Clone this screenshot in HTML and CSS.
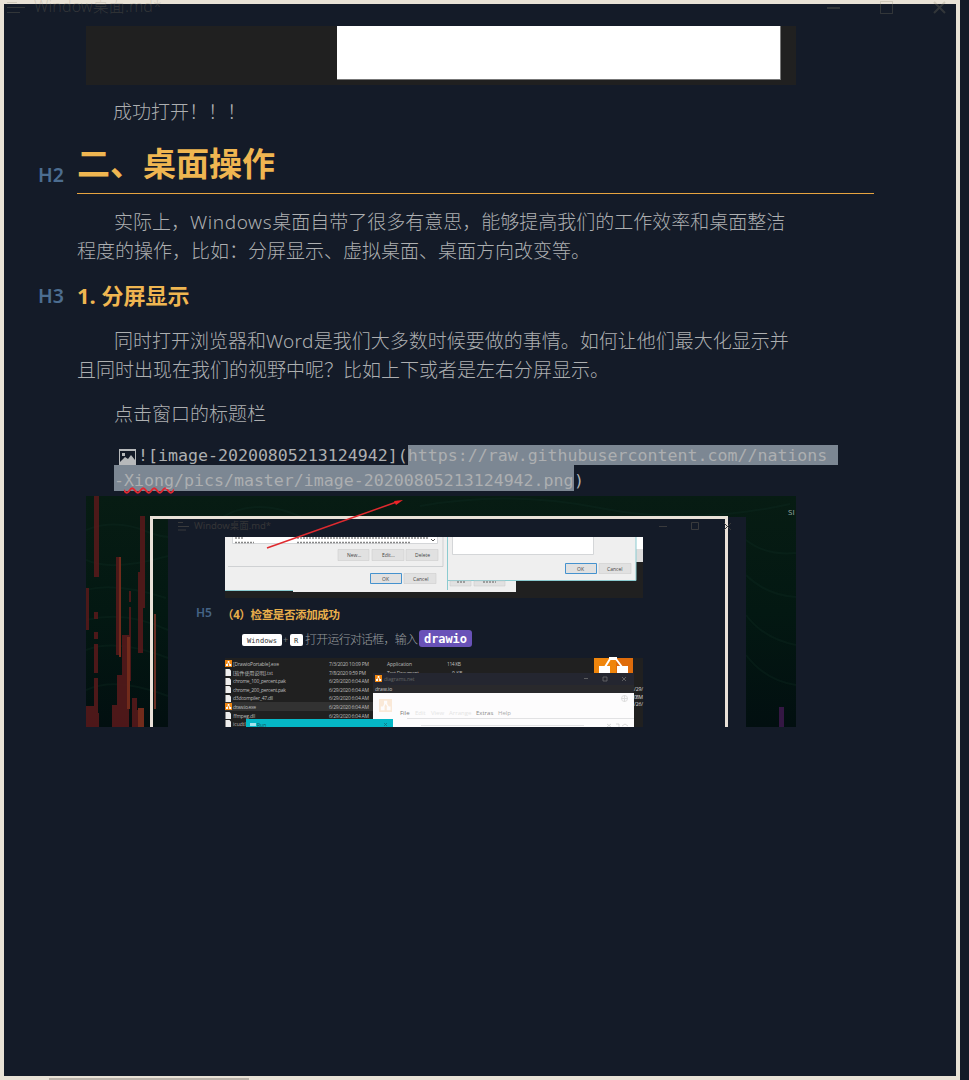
FILE: index.html
```html
<!DOCTYPE html>
<html lang="zh-CN">
<head>
<meta charset="utf-8">
<title>Window桌面.md</title>
<link rel="stylesheet" href="styles.css">
</head>
<body>
<div class="window">
  <header class="titlebar">
    <svg class="menu" width="20" height="15" viewBox="0 0 20 15"><path d="M1 2.500h10M1 7.500h18M1 12.500h13"/></svg>
    <span class="filename">Window桌面.md*</span>
    <svg class="controls" width="122" height="16" viewBox="0 0 122 16"><path stroke-width="2" d="M1 8h13M108 2l11 11M119 2L108 13"/><path d="M54.500 1.500h12v12h-12z"/></svg>
  </header>
  <main class="document">
    <div class="banner"><div class="banner-page"></div></div>
    <p class="opened">成功打开！！！</p>
    <div class="heading h2"><span class="level">H2</span><h2>二、桌面操作</h2></div>
    <p class="intro"><span class="line first">实际上，<span class="latin">Windows</span>桌面自带了很多有意思，能够提高我们的工作效率和桌面整洁</span><span class="line">程度的操作，比如：分屏显示、虚拟桌面、桌面方向改变等。</span></p>
    <div class="heading h3"><span class="level">H3</span><h3>1. 分屏显示</h3></div>
    <p class="split"><span class="line first">同时打开浏览器和<span class="latin word">Word</span>是我们大多数时候要做的事情。如何让他们最大化显示并</span><span class="line">且同时出现在我们的视野中呢？比如上下或者是左右分屏显示。</span></p>
    <p class="click"><span class="line first">点击窗口的标题栏</span></p>
    <div class="source">
      <div class="source-row"><svg class="picture-icon" width="17" height="16" viewBox="0 0 17 16"><path fill="#b7b9bb" d="M0 0h17v16H0z"/><path fill="#141b28" d="M1 2h15v9l-4-5-3 4-3-2-3 3-2 2z"/><path fill="#b7b9bb" d="M3 4h3v3H3z"/></svg><span>![image-20200805213124942](</span><span class="selected top">https://raw.githubusercontent.com//nations</span></div>
      <div class="source-row second"><span class="selected bottom">-<span class="typo">Xiong</span>/pics/master/image-20200805213124942.png</span><span>)</span></div>
    </div>
    <svg class="preview" width="710" height="231" viewBox="86 496 710 231">
      <defs>
        <linearGradient id="sea" x2="0" y2="1"><stop offset="0" stop-color="#071c13"/><stop offset=".5" stop-color="#031812"/><stop offset="1" stop-color="#020f10"/></linearGradient>
        <g id="tree"><path fill="#ee8510" d="M0 0h7v7H0z"/><path d="M3.500 2L2 5M3.500 2l2 3" stroke="#fff" stroke-width=".7"/><path fill="#fff" d="M2.700 1h1.700v1.600H2.700zM1 4h2v2H1zM4.200 4h2v2h-2z"/></g>
        <g id="file"><path fill="#eee" d="M0 0h4l1.500 1.500V7H0z"/></g>
      </defs>
      <path fill="url(#sea)" d="M86 496h710v231H86z"/>
      <g class="waves"><path d="M86 530q30-12 62 2t70-12 90 0M86 560q26 12 82-4M86 590q30-8 80 8M86 620q40-10 82 10M86 650q30-12 82 8M86 690q30-14 82 6M746 540q20 16 50 13M746 575q20 20 50 22M746 615q18 24 50 30M746 655q20 26 50 30M420 506q90-16 180 2t190-4"/></g>
      <g fill="#58191a">
        <path d="M94 496h5v81h-5zM86 588h3v42h-3zM94 612h4v7h-4zM94 632h4v7h-4zM94 644h4v29h-4zM94 678h4v49h-4zM116 557h5v98h-5zM122 635h7v92h-12v-52h5zM129 591h2v11h-2zM129 607h2v74h-2zM112 705h10v22h-10zM132 698h5v12h5v17h-10zM86 706h8v7h5v14H86zM140 516h5v92h-2v45h-5v-81h2z" opacity=".88"/>
        <path d="M119 557h2v100h-2zM127 637h3v72h-3zM138 708h6v19h-6z" fill="#722b1b"/>
      </g>
      <path fill="#341743" d="M779 707h5v20h-5z"/><text x="788" y="515" class="tiny" fill="#99aaa5" font-size="8">SI</text>
      <path fill="#141b28" d="M168 517h578v210H168z"/>
      <path fill="none" stroke="#e9e1d8" stroke-width="3" d="M151.500 727V517.500h575V727"/>
      <path fill="#6a3025" d="M154 614h2v95h-2z"/>
      <g class="inner-controls"><path d="M178 522.500h5M178 526.500h11M178 530h8M659 526.500h8M691.500 522.500h7v7h-7zM724 523l7 7M731 523l-7 7"/></g>
      <text x="194" y="529" fill="#343537" font-size="9.500" textLength="77">Window桌面.md*</text>
      <path fill="#202020" d="M225 537h418v61H225z"/>
      <path fill="#efefef" d="M225 537h291v55H293v-1h-68zM447 537h189v44H447z"/>
      <path fill="#fff" d="M452 537h142v18H452zM232 537h206v7H232zM636 537h7v12h-7z"/><path fill="#ddd" d="M636 549h7v13h-7z"/>
      <path d="M225 590.500h68M447.500 537v53M447 580.500h189V537" fill="none" stroke="#8bcbd0"/>
      <path d="M452.500 537v17.500h141V537M232.500 537v6.500h205V537M228 566.500h215V537" fill="none" stroke="#c2c4c7" stroke-width=".7"/>
      <g fill="#e1e1e1" stroke="#ccc" stroke-width=".6"><path d="M338 549.500h31v11h-31zM372 549.500h32v11h-32zM406 549.500h32v11h-32zM404 573.500h32v10h-32zM599 563.500h32v10h-32zM450 581h21v5h-21zM474 581h31v5h-31z"/></g>
      <path d="M370.500 573.500h31v10h-31zM565.500 563.500h31v10h-31z" fill="#e1e1e1" stroke="#4592ce"/>
      <g class="tiny" fill="#444" font-size="5"><text x="347" y="557">New...</text><text x="382" y="557">Edit...</text><text x="415" y="557">Delete</text><text x="382" y="581">OK</text><text x="413" y="581">Cancel</text><text x="577" y="571">OK</text><text x="607" y="571">Cancel</text></g>
      <path d="M235 538h9m-9 4.500h19M297 538h132M297 542.500h113M457 582h8M483 582h13" stroke="#888" stroke-width="1.500" stroke-dasharray="2 1"/>
      <path d="M431 539l2 2 2-2" stroke="#555" fill="none"/>
      <path d="M267 548L398 501.500" stroke="#df2a2f" stroke-width="1.500"/><path d="M403 500l-7 5-2-4z" fill="#f02327"/>
      <text x="196" y="617" fill="#456486" font-size="12" font-weight="600">H5</text>
      <text x="222" y="619" fill="#e8ae4b" font-size="11.500" font-weight="700" textLength="118">（4）检查是否添加成功</text>
      <rect x="242" y="634" width="40" height="12" rx="2" fill="#fff"/><rect x="290" y="634" width="13" height="12" rx="2" fill="#fff"/>
      <text x="247" y="643" class="mono" fill="#333" font-size="7" textLength="30">Windows</text><text x="294" y="643" class="mono" fill="#333" font-size="7">R</text>
      <text x="283" y="643" fill="#777" font-size="9">+</text>
      <text x="305" y="644" fill="#989b9f" font-size="12" font-weight="300" textLength="113">打开运行对话框，输入</text>
      <rect x="419" y="630" width="53" height="17" rx="3" fill="#6952b8"/><text x="424" y="643" class="mono" fill="#fff" font-size="12" font-weight="700" textLength="43">drawio</text>
      <path fill="#202020" d="M225 658h418v69H225z"/><path fill="#323232" d="M225 702h148v9H225z"/>
      <use href="#tree" x="225" y="660"/><use href="#file" x="225.500" y="669"/><use href="#file" x="225.500" y="678"/><use href="#file" x="225.500" y="686"/><use href="#file" x="225.500" y="695"/><use href="#tree" x="225" y="703"/><use href="#file" x="225.500" y="712"/><use href="#file" x="225.500" y="720"/>
      <g class="tiny" fill="#bcbcbc" font-size="5"><text x="233" y="666" textLength="46">[DrawioPortable].exe</text><text x="233" y="674.500" textLength="40">[软件使用说明].txt</text><text x="233" y="683" textLength="53">chrome_100_percent.pak</text><text x="233" y="691.500" textLength="53">chrome_200_percent.pak</text><text x="233" y="700" textLength="40">d3dcompiler_47.dll</text><text x="233" y="709" textLength="23">draw.io.exe</text><text x="233" y="717.500" textLength="22">ffmpeg.dll</text><text x="233" y="726">icudtl</text>
      <text x="329" y="666" textLength="40">7/3/2020 10:09 PM</text><text x="329" y="674.500" textLength="37">7/8/2020 9:59 PM</text><text x="329" y="683" textLength="40">6/29/2020 6:04 AM</text><text x="329" y="691.500" textLength="40">6/29/2020 6:04 AM</text><text x="329" y="700" textLength="40">6/29/2020 6:04 AM</text><text x="329" y="709" textLength="40">6/29/2020 6:04 AM</text><text x="329" y="717.500" textLength="40">6/29/2020 6:04 AM</text><text x="387" y="666" textLength="25">Application</text><text x="387" y="674.500" textLength="32">Text Document</text><text x="447" y="666" textLength="14">114 KB</text><text x="452" y="674.500">9 KB</text></g>
      <path fill="#ef850c" d="M594 658h39v15h-39z"/><path fill="#df6c0b" d="M616 658h17v15h-17z"/><path d="M610 659l-5 8M616 659l6 8" stroke="#fff" stroke-width="2"/><path fill="#fff" d="M609 657h8v3h-8zM599 666h11v7h-11zM617 666h11v7h-11z"/>
      <path fill="#242630" d="M373 673h261v12H373z"/><path fill="#29292c" d="M373 685h261v8H373z"/><path fill="#fdfcfd" d="M373 693h261v34H373z"/><path stroke="#e2e2e4" d="M407 718.500h227M421 725.500h163" fill="none"/>
      <use href="#tree" x="375" y="675"/><use href="#tree" transform="translate(379 699) scale(1.860)" opacity=".15"/>
      <path d="M584 678.500h4M603 677h4v4h-4zM622 677l4 4M626 677l-4 4" fill="none" stroke="#777" stroke-width=".7"/><circle cx="624.500" cy="698.500" r="3" fill="none" stroke="#ddd"/><path d="M621 698.500h7M624.500 695v7" stroke="#ddd"/>
      <g class="tiny" font-size="5" fill="#ddd"><text x="384" y="681" fill="#666">diagrams.net</text><text x="375" y="691" fill="#ccc">draw.io</text><text x="400" y="714.500" fill="#777" font-size="6">File</text><text x="415" y="714.500" font-size="6" fill="#e4e4e4">Edit</text><text x="431" y="714.500" font-size="6" fill="#e4e4e4">View</text><text x="449" y="714.500" font-size="6" fill="#e4e4e4">Arrange</text><text x="476" y="714.500" font-size="6" fill="#888">Extras</text><text x="498" y="714.500" font-size="6" fill="#aaa">Help</text><text x="634" y="691" textLength="9">/29/</text><text x="634" y="699" textLength="9">08 M</text><text x="634" y="706" textLength="9">/26/</text></g>
      <path d="M607 724l4 3m0-3l-4 3M616 724h3v3M622 726l3-2 3 2" fill="none" stroke="#ccc" stroke-width=".7"/>
      <path fill="#05b7c6" d="M246 719h147v8H246z"/><path fill="#a4e4ee" d="M250 723h6v3h-6z"/><text x="257" y="726.500" class="tiny" font-size="5" fill="#155159">Run</text><path d="M384 723l3 3m0-3l-3 3" stroke="#176c75" stroke-width=".7"/>
    </svg>
  </main>
  <footer class="scroll-thumb"></footer>
</div>
</body>
</html>
```

FILE: styles.css
```css
* { box-sizing: border-box; }
body { margin: 0; background: #141b28; color: #adafb1; font-family: "Noto Sans", "Noto Sans CJK SC", sans-serif; overflow: hidden; }
p, h2, h3 { margin: 0; }
.window { display: flex; flex-direction: column; width: 960px; height: 1080px; box-shadow: inset 0 0 0 4px #e9e2d6; }
.titlebar { display: flex; align-items: flex-start; height: 26px; padding-left: 6px; color: rgba(140, 132, 108, .26); }
.titlebar svg { fill: none; stroke: currentColor; }
.filename { margin: -7px auto 0 8px; font-size: 16px; line-height: 26px; font-weight: 300; letter-spacing: .1px; white-space: nowrap; }
.controls { margin-right: 12px; }
.document { display: flex; flex-direction: column; flex: 1; padding: 0 86px 0 77px; }
.banner { width: 710px; height: 59px; margin-left: 9px; padding-left: 251px; background: #202020; }
.banner-page { width: 444px; height: 54px; background: #fff; border-right: 1px solid #777; border-bottom: 1px solid #777; }
p { font-family: "Noto Sans CJK SC", sans-serif; font-size: 19px; line-height: 29px; font-weight: 300; white-space: nowrap; }
.line { display: block; height: 29px; }
.first { padding-left: 37px; }
.latin { font-family: "Noto Sans", sans-serif; font-weight: 300; line-height: 1; letter-spacing: .6px; }
.word { letter-spacing: .3px; }
.opened { margin-top: 11px; padding-left: 36px; }
.heading { display: flex; margin-left: -39px; }
.level { width: 39px; flex: none; color: #4c6d90; font-family: "Noto Sans", sans-serif; font-size: 19.500px; font-weight: 600; line-height: 26px; }
h2, h3 { font-family: "Noto Sans CJK SC", sans-serif; color: #efb651; font-weight: 700; }
.h2 { margin-top: 16px; height: 53px; }
.h2 .level { padding-top: 21px; }
.h2 h2 { width: 797px; flex: none; font-size: 33px; line-height: 42px; border-bottom: 1px solid #e7a440; }
.intro { margin-top: 12px; }
.h3 { margin-top: 17px; }
.h3 .level { line-height: 30px; }
.h3 { height: 28px; }
h3 { font-family: "Noto Sans", "Noto Sans CJK SC", sans-serif; font-size: 22px; line-height: 28px; }
.split { margin-top: 16px; }
.click { margin-top: 15px; }
.source { width: 761px; margin: 18px 0 5px 37px; font-family: "DejaVu Sans Mono", monospace; font-size: 16.600px; }
.source-row { display: flex; height: 20px; line-height: 21px; white-space: pre; }
.picture-icon { margin: 4px 2px 0 5px; flex: none; }
.selected { background: #7c8793; }
.top { width: 430px; }
.second { height: 26px; line-height: 32px; }
.bottom { width: 460px; }
.typo { text-decoration: underline wavy #e22831 1.500px; text-decoration-skip-ink: none; text-underline-offset: 1px; }
.preview { display: block; flex: none; margin-left: 9px; font-family: "Noto Sans", "Noto Sans CJK SC", sans-serif; }
.waves { fill: none; stroke: #123023; stroke-width: 2; opacity: .3; }
.inner-controls { fill: none; stroke: #393a3c; }
.tiny { font-family: "Open Sans", "Noto Sans CJK SC", sans-serif; }
.mono { font-family: "DejaVu Sans Mono", monospace; }
.scroll-thumb { width: 200px; height: 2px; margin-left: 49px; background: #b9b2a8; }
```
